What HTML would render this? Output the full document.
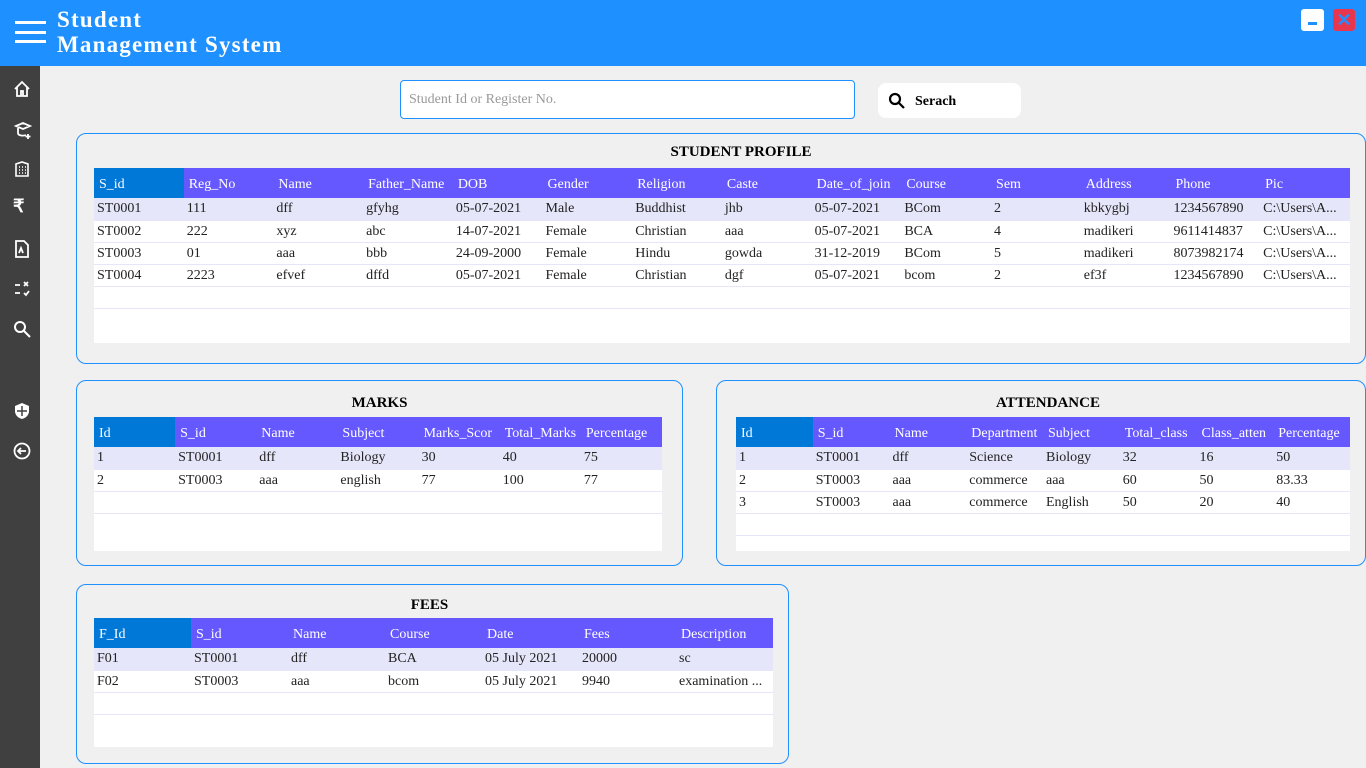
<!DOCTYPE html>
<html><head><meta charset="utf-8"><style>
*{margin:0;padding:0;box-sizing:border-box}
body{width:1366px;height:768px;background:#f0f0f0;font-family:"Liberation Serif",serif;position:relative;overflow:hidden}
.top{position:absolute;left:0;top:0;width:1366px;height:66px;background:#1e90ff}
.title{position:absolute;left:57px;top:7px;color:#fff;font-weight:bold;font-size:23px;line-height:25px;letter-spacing:1.2px}
.side{position:absolute;left:0;top:66px;width:40px;height:702px;background:#404040}
.box{position:absolute;border:1px solid #1e90ff;border-radius:10px;background:#f0f0f0}
.h{position:absolute;font-weight:bold;font-size:15px;text-align:center;width:100%}
.tw{position:absolute;background:#fff;overflow:hidden}
table{border-collapse:collapse;table-layout:fixed;font-size:14px;color:#222}
th{background:#6658ff;color:#fff;font-weight:normal;text-align:left;height:30px;padding-left:5px;padding-top:3px;white-space:nowrap;overflow:hidden}
th:first-child{background:#0078d7}
td{height:22px;padding-left:3px;padding-top:1px;border-bottom:1px solid #e6e6fa;white-space:nowrap;overflow:hidden;text-overflow:ellipsis}
tr.a td{background:#e6e6fa}
.ic{position:absolute;left:13px}
</style></head><body>
<div class="top">
<div style="position:absolute;left:15px;top:21px;width:31px;height:3px;background:#fff"></div>
<div style="position:absolute;left:15px;top:31px;width:31px;height:3px;background:#fff"></div>
<div style="position:absolute;left:15px;top:40px;width:31px;height:3px;background:#fff"></div>
<div class="title">Student<br>Management System</div>
<div style="position:absolute;left:1301px;top:9px;width:23px;height:22px;background:#fff;border-radius:3px"><div style="position:absolute;left:7px;top:13px;width:9px;height:3px;background:#1e90ff"></div></div>
<div style="position:absolute;left:1333px;top:9px;width:22px;height:22px;background:#e8364e;border-radius:3px;color:#1e90ff;font:bold 18px 'Liberation Sans',sans-serif;text-align:center;line-height:22px">✕</div>
</div>
<div class="side">
<svg class="ic" style="top:14px" width="18" height="18" viewBox="0 0 18 18" fill="none" stroke="#fff" stroke-width="1.8"><path d="M2 9L9 2l7 7M4 7v9h4v-5h2v5h4V7"/></svg>
<svg class="ic" style="top:54px" width="20" height="20" viewBox="0 0 20 20" fill="none" stroke="#fff" stroke-width="1.8"><path d="M3 6l7-3 7 3-7 3zM5 8v5c0 3 6 3 8 2M15 14v5M12.5 16.5h5"/></svg>
<svg class="ic" style="top:94px" width="18" height="18" viewBox="0 0 18 18" fill="none" stroke="#fff" stroke-width="1.6"><path d="M3 16V4l6-2 6 2v12zM6 7h1M9 7h1M12 7h1M6 10h1M9 10h1M12 10h1M6 13h1M9 13h1M12 13h1"/></svg>
<div class="ic" style="top:130px;color:#fff;font:bold 18px 'Liberation Sans',sans-serif">₹</div>
<svg class="ic" style="top:173px" width="18" height="20" viewBox="0 0 18 20" fill="none" stroke="#fff" stroke-width="1.8"><path d="M3 2h8l4 4v12H3zM6 14l2-5 2 5"/></svg>
<svg class="ic" style="top:214px" width="18" height="18" viewBox="0 0 18 18" fill="none" stroke="#fff" stroke-width="1.8"><path d="M2 5h5M2 13h5M11 2l4 4M15 2l-4 4M11 13l2 2 3-4"/></svg>
<svg class="ic" style="top:254px" width="18" height="18" viewBox="0 0 18 18" fill="none" stroke="#fff" stroke-width="2"><circle cx="7" cy="7" r="5"/><path d="M11 11l6 6"/></svg>
<svg class="ic" style="top:336px" width="18" height="18" viewBox="0 0 18 18"><path d="M9 1l7 3v5c0 4-3 7-7 8-4-1-7-4-7-8V4z" fill="#fff"/><path d="M9 4v10M4 9h10" stroke="#404040" stroke-width="1.5"/></svg>
<svg class="ic" style="top:376px" width="20" height="20" viewBox="0 0 20 20" fill="none" stroke="#fff" stroke-width="1.8"><circle cx="9" cy="9" r="7.5"/><path d="M13 9H5M8 6L5 9l3 3"/></svg>
</div>
<div style="position:absolute;left:400px;top:80px;width:455px;height:39px;background:#fff;border:1px solid #1e90ff;border-radius:4px;font-size:14px;color:#999;padding:11px 8px">Student Id or Register No.</div>
<div style="position:absolute;left:878px;top:83px;width:143px;height:35px;background:#fff;border-radius:8px">
<svg style="position:absolute;left:10px;top:9px" width="18" height="18" viewBox="0 0 18 18" fill="none" stroke="#000" stroke-width="2.2"><circle cx="7" cy="7" r="5"/><path d="M11 11l5 5"/></svg>
<span style="position:absolute;left:37px;top:11px;font-weight:bold;font-size:14px">Serach</span></div>

<div class="box" style="left:76px;top:133px;width:1290px;height:231px"><div class="h" style="top:10px;padding-left:40px">STUDENT PROFILE</div></div>
<div class="tw" style="left:94px;top:168px;width:1256px;height:175px"><table style="width:1256px"><colgroup><col span="14" style="width:89.7px"></colgroup>
<tr><th>S_id</th><th>Reg_No</th><th>Name</th><th>Father_Name</th><th>DOB</th><th>Gender</th><th>Religion</th><th>Caste</th><th>Date_of_join</th><th>Course</th><th>Sem</th><th>Address</th><th>Phone</th><th>Pic</th></tr>
<tr class="a"><td>ST0001</td><td>111</td><td>dff</td><td>gfyhg</td><td>05-07-2021</td><td>Male</td><td>Buddhist</td><td>jhb</td><td>05-07-2021</td><td>BCom</td><td>2</td><td>kbkygbj</td><td>1234567890</td><td>C:\Users\A...</td></tr>
<tr><td>ST0002</td><td>222</td><td>xyz</td><td>abc</td><td>14-07-2021</td><td>Female</td><td>Christian</td><td>aaa</td><td>05-07-2021</td><td>BCA</td><td>4</td><td>madikeri</td><td>9611414837</td><td>C:\Users\A...</td></tr>
<tr><td>ST0003</td><td>01</td><td>aaa</td><td>bbb</td><td>24-09-2000</td><td>Female</td><td>Hindu</td><td>gowda</td><td>31-12-2019</td><td>BCom</td><td>5</td><td>madikeri</td><td>8073982174</td><td>C:\Users\A...</td></tr>
<tr><td>ST0004</td><td>2223</td><td>efvef</td><td>dffd</td><td>05-07-2021</td><td>Female</td><td>Christian</td><td>dgf</td><td>05-07-2021</td><td>bcom</td><td>2</td><td>ef3f</td><td>1234567890</td><td>C:\Users\A...</td></tr>
<tr><td colspan="14"></td></tr></table></div>

<div class="box" style="left:76px;top:380px;width:607px;height:186px"><div class="h" style="top:14px">MARKS</div></div>
<div class="tw" style="left:94px;top:417px;width:568px;height:134px"><table style="width:568px"><colgroup><col span="7" style="width:81.1px"></colgroup>
<tr><th>Id</th><th>S_id</th><th>Name</th><th>Subject</th><th>Marks_Scor</th><th>Total_Marks</th><th>Percentage</th></tr>
<tr class="a"><td>1</td><td>ST0001</td><td>dff</td><td>Biology</td><td>30</td><td>40</td><td>75</td></tr>
<tr><td>2</td><td>ST0003</td><td>aaa</td><td>english</td><td>77</td><td>100</td><td>77</td></tr>
<tr><td colspan="7"></td></tr></table></div>

<div class="box" style="left:716px;top:380px;width:650px;height:186px"><div class="h" style="top:14px;padding-left:14px">ATTENDANCE</div></div>
<div class="tw" style="left:736px;top:417px;width:614px;height:134px"><table style="width:614px"><colgroup><col span="8" style="width:76.75px"></colgroup>
<tr><th>Id</th><th>S_id</th><th>Name</th><th>Department</th><th>Subject</th><th>Total_class</th><th>Class_atten</th><th>Percentage</th></tr>
<tr class="a"><td>1</td><td>ST0001</td><td>dff</td><td>Science</td><td>Biology</td><td>32</td><td>16</td><td>50</td></tr>
<tr><td>2</td><td>ST0003</td><td>aaa</td><td>commerce</td><td>aaa</td><td>60</td><td>50</td><td>83.33</td></tr>
<tr><td>3</td><td>ST0003</td><td>aaa</td><td>commerce</td><td>English</td><td>50</td><td>20</td><td>40</td></tr>
<tr><td colspan="8"></td></tr></table></div>

<div class="box" style="left:76px;top:584px;width:713px;height:180px"><div class="h" style="top:12px;padding-right:6px">FEES</div></div>
<div class="tw" style="left:94px;top:618px;width:679px;height:129px"><table style="width:679px"><colgroup><col span="7" style="width:97px"></colgroup>
<tr><th>F_Id</th><th>S_id</th><th>Name</th><th>Course</th><th>Date</th><th>Fees</th><th>Description</th></tr>
<tr class="a"><td>F01</td><td>ST0001</td><td>dff</td><td>BCA</td><td>05 July 2021</td><td>20000</td><td>sc</td></tr>
<tr><td>F02</td><td>ST0003</td><td>aaa</td><td>bcom</td><td>05 July 2021</td><td>9940</td><td>examination ...</td></tr>
<tr><td colspan="7"></td></tr></table></div>
</body></html>
